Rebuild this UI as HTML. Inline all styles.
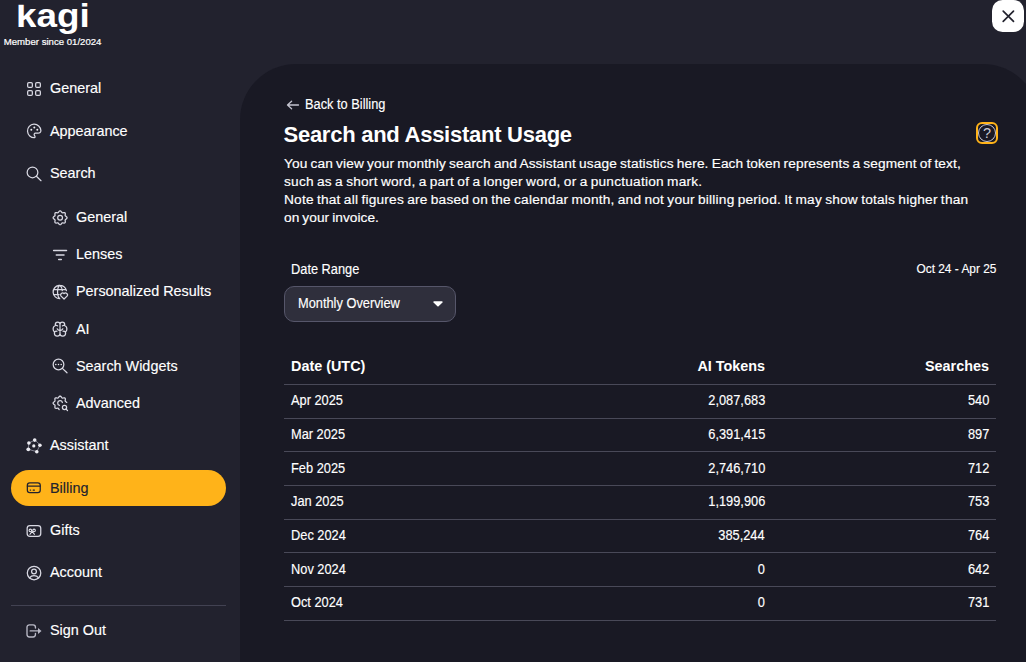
<!DOCTYPE html>
<html lang="en">
<head>
<meta charset="utf-8">
<title>Kagi Settings - Search and Assistant Usage</title>
<style>
*{box-sizing:border-box;margin:0;padding:0}
html,body{width:1026px;height:662px;overflow:hidden;background:#22222e;color:#fff;
  font-family:"Liberation Sans","DejaVu Sans",sans-serif;}
body{position:relative}
.sidebar{position:absolute;left:0;top:0;width:240px;height:662px;background:#22222e}
.logo{position:absolute;left:15.8px;top:-4.9px;font-size:34px;font-weight:bold;transform:scaleX(1.085);transform-origin:0 0;line-height:40px;color:#fff;white-space:nowrap}
.logo span{display:inline-block;clip-path:inset(9.7px 0 0 0)}
.member{position:absolute;left:3.8px;top:35.6px;font-size:9.6px;line-height:12px;color:#fff;white-space:nowrap;-webkit-text-stroke:.2px #fff}
.nav a{position:absolute;left:11px;width:215px;height:36px;border-radius:18px;color:#fff;text-decoration:none;font-size:14.4px;line-height:36px;white-space:nowrap}
.nav a svg{position:absolute;left:13px;top:8px;width:20px;height:20px;stroke:#d9d9e3;fill:none;stroke-width:1.25;stroke-linecap:round;stroke-linejoin:round;overflow:visible}
.nav a svg .f{fill:#ececf2;stroke:none}
.nav a span{position:absolute;left:39px;top:0;-webkit-text-stroke:.15px currentColor}
.nav a.sub svg{left:39px}
.nav a.sub span{left:65px}
.nav a.active{background:#ffb319;color:#22222e}
.nav a.active svg{stroke:#22222e}
.nav a.active svg .f{fill:#22222e}
.divider{position:absolute;left:11px;top:605px;width:215px;height:1px;background:#424252}
.panel{position:absolute;left:240px;top:64px;width:799px;height:700px;background:#191924;border-radius:56px 56px 0 0}
.close{position:absolute;left:992px;top:0;width:32px;height:32px;background:#fff;border-radius:10.5px}
.close svg{position:absolute;left:6px;top:6px;width:20px;height:20px;stroke:#22222e;stroke-width:1.7;stroke-linecap:round;fill:none}
td .n,td .nr{position:relative;top:-1px}
.n,.nr{-webkit-text-stroke:.15px currentColor}
.n{display:inline-block;transform:scaleX(.915);transform-origin:0 50%;white-space:nowrap}
.nr{display:inline-block;transform:scaleX(.915);transform-origin:100% 50%;white-space:nowrap}
.back{position:absolute;left:286px;top:95px;font-size:14px;line-height:18px;white-space:nowrap;color:#fff}
.back svg{position:absolute;left:0;top:3.8px;width:14px;height:12px;stroke:#c4c4d0;stroke-width:1.3;fill:none;stroke-linecap:round;stroke-linejoin:round}
.back .n{position:absolute;left:18.7px;top:0}
h1{position:absolute;left:283.5px;top:122px;letter-spacing:-.26px;font-size:22px;line-height:26px;font-weight:bold;white-space:nowrap}
.desc{position:absolute;left:284px;top:155px;font-size:13.7px;line-height:18px;word-spacing:-.8px;letter-spacing:.13px;-webkit-text-stroke:.18px #fff;white-space:nowrap;color:#fff}
.help{position:absolute;left:976px;top:122px;width:22px;height:22px;border:2px solid #ffb319;border-radius:6px}
.help b{position:absolute;left:0;top:0;width:18px;height:18px;border:1px solid #c8c8d4;border-radius:50%;font-weight:normal;font-size:14.5px;line-height:17px;text-align:center;color:#c8c8d4}
.lbl{position:absolute;left:290.5px;top:260px;font-size:14px;line-height:18px}
.range{position:absolute;right:29.6px;top:260px;font-size:13px;line-height:18px}
.select{position:absolute;left:284px;top:286px;width:172px;height:36px;border:1px solid #56566a;border-radius:10px;background:#2f2f3c;font-size:14px;line-height:33px;padding-left:12.6px}
.select svg{position:absolute;left:147px;top:13px;width:12px;height:8px;fill:#fff}
table{position:absolute;left:284px;top:348.45px;width:712px;border-collapse:collapse;font-size:14px}
th,td{height:33.7px;padding:0 7px;border-bottom:1px solid #494958;text-align:right;vertical-align:middle}
th:first-child,td:first-child{text-align:left}
th{font-weight:bold;height:36px;font-size:14.4px}
</style>
</head>
<body>
<div class="sidebar">
  <div class="logo"><span>k</span>agi</div>
  <div class="member">Member since 01/2024</div>
  <div class="nav">
    <a style="top:70px"><svg viewBox="0 0 20 20"><rect x="3.65" y="4.65" width="4.7" height="4.7" rx="1.2"/><rect x="11.65" y="4.65" width="4.7" height="4.7" rx="1.2"/><rect x="3.65" y="12.65" width="4.7" height="4.7" rx="1.2"/><rect x="11.65" y="12.65" width="4.7" height="4.7" rx="1.2"/></svg><span>General</span></a>
    <a style="top:113px"><svg viewBox="0 0 20 20"><path d="M10.6 16.6A6.7 6.7 0 1 1 16.9 9.6c.1 1.7-1.3 2.6-2.8 2.6h-2.7a1.3 1.3 0 0 0-1 2.1c.7.9.9 2.1.2 2.3z"/><circle class="f" cx="7.3" cy="8.8" r="1"/><circle class="f" cx="10.3" cy="6.5" r="1"/><circle class="f" cx="13.3" cy="8.8" r="1"/></svg><span>Appearance</span></a>
    <a style="top:155px"><svg viewBox="0 0 20 20"><circle cx="8.5" cy="9.4" r="5.35"/><path d="M12.4 13.3l4.6 4.4"/></svg><span>Search</span></a>
    <a class="sub" style="top:199px"><svg viewBox="0 0 20 20"><path d="M10.1 3.8L10.8 4.1L11.3 4.7L11.8 5.3L12.2 5.7L12.8 5.8L13.6 5.6L14.4 5.6L15.0 5.9L15.3 6.5L15.3 7.3L15.1 8.1L15.2 8.7L15.6 9.1L16.2 9.6L16.8 10.1L17.1 10.8L16.8 11.5L16.2 12.0L15.6 12.5L15.2 12.9L15.1 13.5L15.3 14.3L15.3 15.1L15.0 15.7L14.4 16.0L13.6 16.0L12.8 15.8L12.2 15.9L11.8 16.3L11.3 16.9L10.8 17.5L10.1 17.8L9.4 17.5L8.9 16.9L8.4 16.3L8.0 15.9L7.4 15.8L6.6 16.0L5.8 16.0L5.2 15.7L4.9 15.1L4.9 14.3L5.1 13.5L5.0 12.9L4.6 12.5L4.0 12.0L3.4 11.5L3.1 10.8L3.4 10.1L4.0 9.6L4.6 9.1L5.0 8.7L5.1 8.1L4.9 7.3L4.9 6.5L5.2 5.9L5.8 5.6L6.6 5.6L7.4 5.8L8.0 5.7L8.4 5.3L8.9 4.7L9.4 4.1Z"/><circle cx="10.1" cy="10.8" r="2.4"/></svg><span>General</span></a>
    <a class="sub" style="top:236px"><svg viewBox="0 0 20 20" style="stroke-width:1.5"><path d="M3.6 6.4h12.9M6.3 11h7.7M8.7 15.5h2.6"/></svg><span>Lenses</span></a>
    <a class="sub" style="top:273px"><svg viewBox="0 0 20 20"><path d="M16.4 9.6A6.7 6.7 0 1 0 9.8 17.7M3.5 8.5h12.6M3.5 13.6h5.6M9.8 4.3c-3 2.3-3 10.9 0 13.4M9.8 4.3c1.500 1.2 2.300 2.900 2.500 5.300"/><path d="M14.05 18l-3-2.900a1.900 1.900 0 0 1 3-2.400a1.900 1.900 0 0 1 3 2.400z"/></svg><span>Personalized Results</span></a>
    <a class="sub" style="top:311px"><svg viewBox="0 0 20 20"><path d="M10 5.300C10 4 9 3.100 7.700 3.100C6.300 3.100 5.300 4.100 5.300 5.500C5.300 5.900 5.400 6.200 5.500 6.500C4.100 7 3.100 8.400 3.100 10C3.100 11.200 3.700 12.300 4.600 13C4.500 13.400 4.400 13.800 4.400 14.200C4.400 15.800 5.700 17 7.300 17C8.800 17 10 15.900 10 14.400M10 5.3 C10 4 11 3.1 12.3 3.1 C13.7 3.1 14.7 4.1 14.7 5.5 C14.7 5.9 14.6 6.2 14.5 6.5 C15.9 7 16.9 8.4 16.9 10 C16.9 11.2 16.3 12.3 15.4 13 C15.5 13.4 15.6 13.8 15.6 14.2 C15.6 15.8 14.3 17 12.7 17 C11.2 17 10 15.9 10 14.4M10 5.300V14.400M5.500 6.500c.8-.3 1.600-.1 2.100.4M14.500 6.500c-.8-.3-1.600-.1-2.100.4M4.600 13c.6-.6 1.500-.9 2.300-.7M15.400 13c-.6-.6-1.500-.9-2.300-.7M7.200 9.800c.3 1 1.400 1.700 2.800 1.700s2.500-.7 2.800-1.700"/></svg><span>AI</span></a>
    <a class="sub" style="top:348px"><svg viewBox="0 0 20 20"><circle cx="8.500" cy="8.500" r="5.350"/><path d="M12.400 12.400l4.600 4.400"/><circle class="f" cx="5.800" cy="8.500" r=".75"/><circle class="f" cx="8.500" cy="8.500" r=".75"/><circle class="f" cx="11.200" cy="8.500" r=".75"/></svg><span>Search Widgets</span></a>
    <a class="sub" style="top:385px"><svg viewBox="0 0 20 20"><path d="M9.2 16.6L8.7 16.0L8.3 15.4L7.9 15.1L7.3 15.2L6.5 15.3L5.7 15.3L5.1 15.0L4.9 14.4L4.9 13.6L5.0 12.9L5.0 12.3L4.7 11.8L4.1 11.4L3.5 10.9L3.1 10.3L3.2 9.7L3.7 9.1L4.3 8.7L4.8 8.3L5.1 7.8L5.0 7.2L4.9 6.4L4.9 5.6L5.2 5.1L5.9 4.8L6.7 4.9L7.4 5.1L8.0 5.0L8.4 4.7L8.8 4.1L9.3 3.4L9.9 3.1L10.6 3.2L11.1 3.7L11.6 4.4L12.0 4.9L12.5 5.1L13.1 5.0L13.9 4.9L14.7 4.9L15.2 5.3L15.4 6.0L15.3 6.8L15.1 7.5L15.2 8.0L15.6 8.5L16.2 8.9L16.8 9.4"/><path d="M9.500 12.400A2.400 2.400 0 1 1 12.400 9.500"/><circle cx="14.500" cy="14.500" r="2.100"/><path d="M16.100 16.100l1.400 1.400"/></svg><span>Advanced</span></a>
    <a style="top:427px"><svg viewBox="0 0 20 20"><path style="stroke-width:.8;stroke:#9c9cab" d="M10.700 5.100L4.900 8 4.300 14.300 12.800 16.700 15.900 10.300z"/><circle class="f" cx="10.700" cy="5.100" r="1.800"/><circle class="f" cx="4.900" cy="8" r="1.800"/><circle class="f" cx="15.900" cy="10.300" r="1.800"/><circle class="f" cx="4.300" cy="14.300" r="1.900"/><circle class="f" cx="12.800" cy="16.700" r="1.800"/><circle class="f" cx="9.800" cy="10.900" r="1.600"/></svg><span>Assistant</span></a>
    <a class="active" style="top:470px"><svg viewBox="0 0 20 20"><rect x="3.350" y="4.750" width="12.900" height="9.900" rx="2.400"/><path d="M3.400 8.100h12.800M6.200 12.100h.4M9.200 12.100h1.200"/></svg><span>Billing</span></a>
    <a style="top:512px"><svg viewBox="0 0 20 20"><rect x="3.150" y="5.550" width="13.600" height="10.800" rx="2.800"/><g style="stroke-width:1.05;stroke:#e6e6ee"><circle cx="6.350" cy="10.400" r="1.300"/><circle cx="10.050" cy="10.400" r="1.300"/><path d="M8.200 11.500l2.300 2.800M8.200 11.500l-2.300 2.800"/></g></svg><span>Gifts</span></a>
    <a style="top:554px"><svg viewBox="0 0 20 20"><circle cx="10.050" cy="11" r="6.750"/><circle cx="10" cy="9.500" r="2.400"/><path d="M5.500 15.900c2.300-3 6.700-3 9.100 0"/></svg><span>Account</span></a>
    <a style="top:612px"><svg viewBox="0 0 20 20" style="stroke:#b9b9c6;stroke-width:1.35"><path d="M11.450 8V7.200a2.400 2.400 0 0 0-2.400-2.400H5.400a2.400 2.400 0 0 0-2.400 2.400v7.400a2.400 2.400 0 0 0 2.400 2.400h3.650a2.400 2.400 0 0 0 2.400-2.400V13.300M6.200 10.900h8.500"/><path style="fill:#b9b9c6;stroke:none" d="M14 7.900l3.500 3-3.500 3z"/></svg><span>Sign Out</span></a>
  </div>
  <div class="divider"></div>
</div>
<div class="panel"></div>
<div class="close"><svg viewBox="0 0 20 20"><path d="M5.200 5.200l10.300 10.200M15.500 5.200L5.200 15.400"/></svg></div>
<div class="back"><svg viewBox="0 0 14 12"><path d="M1.500 6h11M5.600 2.300L1.500 6l4.100 3.700"/></svg><span class="n">Back to Billing</span></div>
<h1>Search and Assistant Usage</h1>
<div class="help"><b>?</b></div>
<div class="desc"><span style="letter-spacing:.112px">You can view your monthly search and Assistant usage statistics here. Each token represents a segment of text,</span><br><span style="letter-spacing:.216px">such as a short word, a part of a longer word, or a punctuation mark.</span><br><span style="letter-spacing:.21px">Note that all figures are based on the calendar month, and not your billing period. It may show totals higher than</span><br><span style="letter-spacing:.04px">on your invoice.</span></div>
<div class="lbl"><span class="n">Date Range</span></div>
<div class="range"><span class="nr">Oct 24 - Apr 25</span></div>
<div class="select"><span class="n">Monthly Overview</span><svg viewBox="0 0 12 8"><path d="M2 1.300h8a.7.700 0 0 1 .5 1.200L6.600 6.200a.85.850 0 0 1-1.200 0L1.500 2.500a.7.700 0 0 1 .5-1.200z"/></svg></div>
<table>
<tr><th>Date (UTC)</th><th>AI Tokens</th><th>Searches</th></tr>
<tr><td><span class="n">Apr 2025</span></td><td><span class="nr">2,087,683</span></td><td><span class="nr">540</span></td></tr>
<tr><td><span class="n">Mar 2025</span></td><td><span class="nr">6,391,415</span></td><td><span class="nr">897</span></td></tr>
<tr><td><span class="n">Feb 2025</span></td><td><span class="nr">2,746,710</span></td><td><span class="nr">712</span></td></tr>
<tr><td><span class="n">Jan 2025</span></td><td><span class="nr">1,199,906</span></td><td><span class="nr">753</span></td></tr>
<tr><td><span class="n">Dec 2024</span></td><td><span class="nr">385,244</span></td><td><span class="nr">764</span></td></tr>
<tr><td><span class="n">Nov 2024</span></td><td><span class="nr">0</span></td><td><span class="nr">642</span></td></tr>
<tr><td><span class="n">Oct 2024</span></td><td><span class="nr">0</span></td><td><span class="nr">731</span></td></tr>
</table>
</body>
</html>
